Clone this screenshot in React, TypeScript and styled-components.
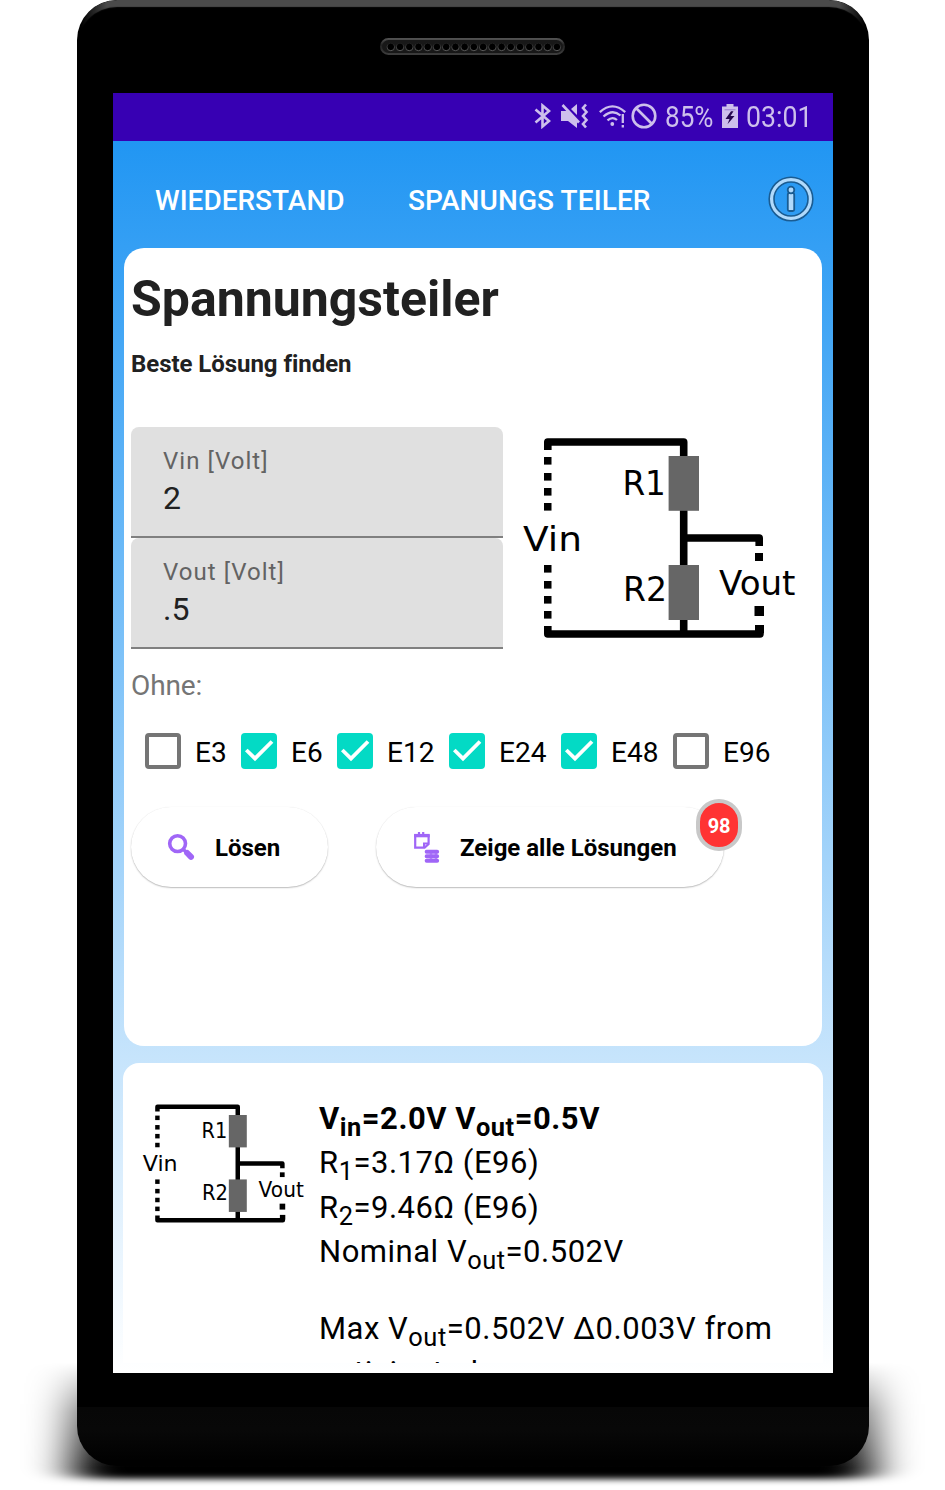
import React from "react";
import styled, { createGlobalStyle } from "styled-components";

const GlobalStyle = createGlobalStyle`
  * { box-sizing: border-box; }
  body { margin: 0; background: #fff; font-family: Roboto, "Noto Sans", sans-serif; }
  h1, h2, p { margin: 0; }
`;

const Stage = styled.main`
  position: relative;
  width: 945px;
  height: 1490px;
  overflow: hidden;
  background: #fff;
`;

const Shadow = styled.svg`
  position: absolute;
  left: 0;
  bottom: 0;
`;

const Phone = styled.div`
  position: relative;
  width: 792px;
  height: 1466px;
  margin-left: 77px;
  padding: 0 36px;
  border-radius: 40px;
  overflow: hidden;
  background: linear-gradient(#000 0 1407px, #070707 1407px, #080808 1430px, #010101 1460px);
`;

const TopEdge = styled.div`
  position: absolute;
  inset: 0 0 auto 0;
  height: 44px;
  border-radius: 40px 40px 0 0;
  box-shadow: inset 0 7px 1px #4a4a4a;
  mask-image: linear-gradient(90deg, transparent 4px, #000 30px calc(100% - 30px), transparent calc(100% - 4px));
`;

const Earpiece = styled.div`
  height: 93px;
  padding: 37px 0 0 267px;
`;

const Screen = styled.div`
  width: 720px;
  height: 1280px;
  overflow: hidden;
`;

const StatusBar = styled.div`
  display: flex;
  align-items: center;
  justify-content: flex-end;
  height: 48px;
  padding: 0 22px 2px 0;
  background: #3700b3;
  color: #cdbfec;
`;

const StatusIcon = styled.svg<{ $gap: number }>`
  flex: none;
  margin-right: ${(p) => p.$gap}px;
`;

const StatusText = styled.span<{ $width: number; $gap?: number; $stretch: number }>`
  width: ${(p) => p.$width}px;
  margin-right: ${(p) => p.$gap ?? 0}px;
  padding-top: 1px;
  font-size: 30px;
  line-height: 48px;
  white-space: nowrap;
  transform: scaleX(${(p) => p.$stretch});
  transform-origin: left center;
`;

const AppBody = styled.div`
  height: 1232px;
  padding: 0 10px;
  background: linear-gradient(#2196f3, #fff);
`;

const Header = styled.nav`
  display: flex;
  align-items: center;
  height: 107px;
  padding: 12px 8px 0 32px;
`;

const Tab = styled.span<{ $width: number; $spacing?: number }>`
  width: ${(p) => p.$width}px;
  font-size: 28px;
  font-weight: 500;
  line-height: 34px;
  letter-spacing: ${(p) => p.$spacing ?? 0}px;
  white-space: nowrap;
  color: #fff;
`;

const InfoIcon = styled.svg`
  flex: none;
  margin: -3px 0 0 auto;
`;

const SolverCard = styled.section`
  height: 798px;
  margin: 0 1px;
  padding: 21px 7px 0;
  border-radius: 20px;
  background: #fff;
`;

const Title = styled.h1`
  font-size: 50px;
  line-height: 60px;
  font-weight: 700;
  color: #212121;
`;

const Subtitle = styled.h2`
  margin-top: 21px;
  font-size: 24px;
  line-height: 28px;
  font-weight: 700;
  letter-spacing: -0.05px;
  font-variant-ligatures: common-ligatures;
  color: #212121;
`;

const InputRow = styled.div`
  display: flex;
  margin-top: 49px;
`;

const Fields = styled.div`
  width: 372px;
  margin-right: 17px;
`;

const Field = styled.div`
  height: 111px;
  padding: 20px 32px 0;
  border-radius: 8px 8px 0 0;
  border-bottom: 2px solid #808080;
  background: #e0e0e0;
`;

const FieldLabel = styled.div`
  font-size: 24px;
  line-height: 28px;
  letter-spacing: 1.05px;
  color: #636363;
`;

const FieldValue = styled.div`
  margin-top: 4px;
  font-size: 32px;
  line-height: 38px;
  color: #212121;
`;

const DiagramSlot = styled.div`
  padding-top: 7px;
`;

const Caption = styled.p`
  margin-top: 21px;
  font-size: 28px;
  line-height: 32px;
  letter-spacing: -0.1px;
  color: #757575;
`;

const CheckRow = styled.div`
  display: flex;
  height: 36px;
  margin: 31px 0 0 14px;
`;

const CheckItem = styled.label<{ $width: number }>`
  display: flex;
  width: ${(p) => p.$width}px;
  font-size: 28px;
  line-height: 40px;
  color: #000;
`;

const Box = styled.span<{ $on: boolean }>`
  display: flex;
  width: 36px;
  height: 36px;
  margin-right: 14px;
  border-radius: 4px;
  border: ${(p) => (p.$on ? "0" : "4px solid #757575")};
  background: ${(p) => (p.$on ? "#03dac5" : "#fff")};
`;

const Actions = styled.div`
  display: flex;
  gap: 48px;
  margin-top: 38px;
`;

const PillButton = styled.div<{ $width: number }>`
  position: relative;
  display: flex;
  align-items: center;
  width: ${(p) => p.$width}px;
  height: 80px;
  padding: 2px 0 0 35px;
  border-radius: 40px;
  background: #fff;
  box-shadow: 0 1px 1.5px rgba(0, 0, 0, 0.26), 0 0 1px rgba(0, 0, 0, 0.08);
  font-size: 24px;
  font-weight: 700;
  white-space: nowrap;
  color: #000;
`;

const ButtonIcon = styled.svg`
  flex: none;
  width: 30px;
  height: 36px;
  margin-right: 19px;
`;

const Badge = styled.span`
  position: absolute;
  top: -8px;
  right: -18px;
  width: 46px;
  height: 52px;
  border: 4px solid #c8c8c8;
  border-radius: 23px;
  background: #f33;
  font-size: 20px;
  line-height: 47px;
  text-align: center;
  letter-spacing: -0.2px;
  color: #fff;
`;

const ResultCard = styled.section`
  display: flex;
  height: 300px;
  margin-top: 17px;
  padding: 34px 0 0 18px;
  border-radius: 16px 16px 0 0;
  background: #fff;
  overflow: hidden;
`;

const ResultDiagram = styled.div`
  width: 178px;
  padding-top: 4.5px;
`;

const ResultText = styled.div`
  font-size: 31px;
  letter-spacing: 0.52px;
  color: #000;
`;

const ResultLine = styled.p<{ $bold?: boolean; $after?: number }>`
  height: 44.4px;
  margin-bottom: ${(p) => p.$after ?? 0}px;
  line-height: 44px;
  font-weight: ${(p) => (p.$bold ? 700 : 400)};
  white-space: nowrap;
`;

const Sub = styled.sub`
  position: relative;
  top: 7px;
  vertical-align: baseline;
  font-size: 0.82em;
  line-height: 0;
`;

const leftDots = [457, 473, 488, 503, 565, 581, 596, 611];

function DividerDiagram({ width }: { width: number }) {
  return (
    <svg width={width} height={(width * 208) / 280} viewBox="520 434 280 208" style={{ display: "block" }}>
      <g fill="none" stroke="#000" strokeWidth="7.6" strokeLinejoin="round">
        <path d="M547.8 450V442H683.7V634" />
        <path d="M683.7 538H759.2V546" />
        <path d="M547.8 626V634H760V625" />
      </g>
      {leftDots.map((y) => (
        <rect key={y} x="544" y={y} width="7.5" height="7.6" />
      ))}
      <rect x="755" y="553" width="8" height="8" />
      <rect x="754.5" y="606" width="9.5" height="10" />
      <rect x="755" y="625" width="9" height="8" />
      <g fill="#666">
        <rect x="668.6" y="456" width="30.4" height="54.8" />
        <rect x="668.6" y="565" width="30.4" height="55" />
      </g>
      <g fontFamily="'DejaVu Sans', sans-serif" fontSize="34.5">
        <text x="622.4" y="494.6" textLength="43.5" lengthAdjust="spacingAndGlyphs">R1</text>
        <text x="623" y="600.6" textLength="44" lengthAdjust="spacingAndGlyphs">R2</text>
        <text x="523" y="551" textLength="59" lengthAdjust="spacingAndGlyphs">Vin</text>
        <text x="719" y="595" textLength="76.5" lengthAdjust="spacingAndGlyphs">Vout</text>
      </g>
    </svg>
  );
}

const series = [
  { name: "E3", on: false, width: 96 },
  { name: "E6", on: true, width: 96 },
  { name: "E12", on: true, width: 112 },
  { name: "E24", on: true, width: 112 },
  { name: "E48", on: true, width: 112 },
  { name: "E96", on: false, width: 112 },
];

function EarpieceGrille() {
  return (
    <svg width="186" height="19" viewBox="0 0 186 19">
      <defs>
        <linearGradient id="rim" x1="0" y1="0" x2="0" y2="1">
          <stop offset="0" stopColor="#505050" />
          <stop offset=".4" stopColor="#222" />
          <stop offset="1" stopColor="#3c3c3c" />
        </linearGradient>
        <linearGradient id="hole" x1="0" y1="0" x2="0" y2="1">
          <stop offset="0" stopColor="#1c1c1c" />
          <stop offset="1" stopColor="#5c5c5c" />
        </linearGradient>
      </defs>
      <rect x="1" y="2" width="183" height="15" rx="7.5" fill="#181818" stroke="url(#rim)" strokeWidth="2" />
      {Array.from({ length: 19 }, (_, i) => (
        <circle key={i} cx={10.8 + i * 9.23} cy="9.9" r="3.8" fill="#000" stroke="url(#hole)" strokeWidth="1" />
      ))}
    </svg>
  );
}

export default function App() {
  return (
    <>
      <GlobalStyle />
      <Stage>
        <Shadow width="945" height="150" viewBox="0 0 945 150">
          <defs>
            <filter id="soft" x="-20%" y="-20%" width="140%" height="140%">
              <feGaussianBlur stdDeviation="22 3.2" />
            </filter>
            <linearGradient id="fade" x1="0" y1="0" x2="0" y2="1">
              <stop offset=".15" stopColor="#000" />
              <stop offset=".48" stopColor="#999" />
              <stop offset=".85" stopColor="#fff" />
            </linearGradient>
            <mask id="fadeMask">
              <rect width="945" height="150" fill="url(#fade)" />
            </mask>
          </defs>
          <g mask="url(#fadeMask)">
            <path d="M72 0H873V125Q873 139 850 139H95Q72 139 72 125Z" filter="url(#soft)" />
          </g>
        </Shadow>
        <Phone>
          <TopEdge />
          <Earpiece>
            <EarpieceGrille />
          </Earpiece>
          <Screen>
            <StatusBar>
              <StatusIcon $gap={10} width="17" height="26" viewBox="0 0 17 26" fill="none" stroke="currentColor" strokeWidth="2.6">
                <path d="M1.5 6.5L15 18L8.5 23.5V2.5L15 8L1.5 19.5" />
              </StatusIcon>
              <StatusIcon $gap={10} width="28" height="26" viewBox="0 0 28 26" fill="currentColor">
                <path d="M0 8H6L16 18V25L7 18H0Z M10 6L16 1V12Z" />
                <path d="M1.5 2L18 19.5" stroke="currentColor" strokeWidth="2.6" />
                <path d="M25 1.5L22 5L25.5 9L22 13L25.5 17L22 21L25 24.5" fill="none" stroke="currentColor" strokeWidth="2.6" />
              </StatusIcon>
              <StatusIcon $gap={5} width="27" height="24" viewBox="0 0 27 24" fill="none" stroke="currentColor" strokeWidth="2.3">
                <path d="M.8 8.2Q13.5 -3.5 26.2 8.2M4.5 12.5Q13.5 4.5 21.5 11.5M8.5 16.3Q13.5 12 18 16" />
                <circle cx="13.3" cy="20" r="1.9" fill="currentColor" stroke="none" />
                <path d="M23.8 10V19M23.8 21V23.5" />
              </StatusIcon>
              <StatusIcon $gap={8} width="26" height="26" viewBox="0 0 26 26" fill="none" stroke="currentColor" strokeWidth="2.6">
                <circle cx="13" cy="13" r="11.3" />
                <path d="M5 5L21 21" />
              </StatusIcon>
              <StatusText $width={48} $gap={9} $stretch={0.87}>85%</StatusText>
              <StatusIcon $gap={8} width="16" height="24" viewBox="0 0 16 25" preserveAspectRatio="none">
                <path d="M4.5 0H11.5V2.5H16V25H0V2.5H4.5Z" fill="currentColor" />
                <path d="M2.5 6H13.5" stroke="#9d83d5" strokeWidth="1.2" />
                <path d="M9 7.5L3.5 15.5H7.5L5.5 21L12.5 12.5H8.5L11.5 7.5Z" fill="#24074f" />
              </StatusIcon>
              <StatusText $width={65} $stretch={0.89}>03:01</StatusText>
            </StatusBar>
            <AppBody>
              <Header>
                <Tab $width={253}>WIEDERSTAND</Tab>
                <Tab $width={250} $spacing={0.1}>SPANUNGS TEILER</Tab>
                <InfoIcon width="48" height="48" viewBox="0 0 48 48" fill="none">
                  <circle cx="24" cy="24" r="19.4" stroke="#1a5c92" strokeWidth="6.4" />
                  <circle cx="24" cy="24" r="19.4" stroke="#b0dafc" strokeWidth="3.2" />
                  <rect x="20.8" y="18" width="6.4" height="18" rx="1.5" fill="#b0dafc" stroke="#1a5c92" strokeWidth="1.8" />
                  <circle cx="24" cy="15" r="3.3" fill="#b0dafc" stroke="#1a5c92" strokeWidth="1.8" />
                </InfoIcon>
              </Header>
              <SolverCard>
                <Title>Spannungsteiler</Title>
                <Subtitle>Beste Lösung finden</Subtitle>
                <InputRow>
                  <Fields>
                    <Field>
                      <FieldLabel>Vin [Volt]</FieldLabel>
                      <FieldValue>2</FieldValue>
                    </Field>
                    <Field>
                      <FieldLabel>Vout [Volt]</FieldLabel>
                      <FieldValue>.5</FieldValue>
                    </Field>
                  </Fields>
                  <DiagramSlot>
                    <DividerDiagram width={280} />
                  </DiagramSlot>
                </InputRow>
                <Caption>Ohne:</Caption>
                <CheckRow>
                  {series.map((s) => (
                    <CheckItem key={s.name} $width={s.width}>
                      <Box $on={s.on}>
                        {s.on && (
                          <svg width="36" height="36" viewBox="0 0 36 36" fill="none" stroke="#fff" strokeWidth="3.8">
                            <path d="M5.3 17L14 25.5L31 8.5" />
                          </svg>
                        )}
                      </Box>
                      {s.name}
                    </CheckItem>
                  ))}
                </CheckRow>
                <Actions>
                  <PillButton $width={197}>
                    <ButtonIcon viewBox="0 0 30 36" fill="none" stroke="#a066f7">
                      <circle cx="11.6" cy="13.6" r="7.9" strokeWidth="3.6" />
                      <path d="M17 19L21 23" strokeWidth="3.4" />
                      <path d="M21.2 23L25 26.8" strokeWidth="6" strokeLinecap="round" />
                    </ButtonIcon>
                    Lösen
                  </PillButton>
                  <PillButton $width={348}>
                    <ButtonIcon viewBox="0 0 30 36" fill="none" stroke="#a066f7">
                      <path d="M4.2 5.6H17.6V14L13.6 17.6H4.2Z" strokeWidth="2.2" />
                      <path d="M3.1 5.6H18.7" strokeWidth="3.4" />
                      <path d="M8 2V5M12.2 2V5" strokeWidth="2.2" />
                      <path d="M13 17.5V13.6H17.5" strokeWidth="2" />
                      <path d="M15.6 21.7H26.2M15.6 26.2H26.2M15.6 30.8H26.2" strokeWidth="3.9" strokeLinecap="round" />
                      <path d="M20 21V31M25 21V31" strokeWidth="2.4" opacity=".7" />
                    </ButtonIcon>
                    Zeige alle Lösungen
                    <Badge>98</Badge>
                  </PillButton>
                </Actions>
              </SolverCard>
              <ResultCard>
                <ResultDiagram>
                  <DividerDiagram width={165.5} />
                </ResultDiagram>
                <ResultText>
                  <ResultLine $bold>V<Sub>in</Sub>=2.0V V<Sub>out</Sub>=0.5V</ResultLine>
                  <ResultLine>R<Sub>1</Sub>=3.17Ω (E96)</ResultLine>
                  <ResultLine>R<Sub>2</Sub>=9.46Ω (E96)</ResultLine>
                  <ResultLine $after={32.4}>Nominal V<Sub>out</Sub>=0.502V</ResultLine>
                  <ResultLine>Max V<Sub>out</Sub>=0.502V Δ0.003V from</ResultLine>
                  <ResultLine>anticipated</ResultLine>
                </ResultText>
              </ResultCard>
            </AppBody>
          </Screen>
        </Phone>
      </Stage>
    </>
  );
}
